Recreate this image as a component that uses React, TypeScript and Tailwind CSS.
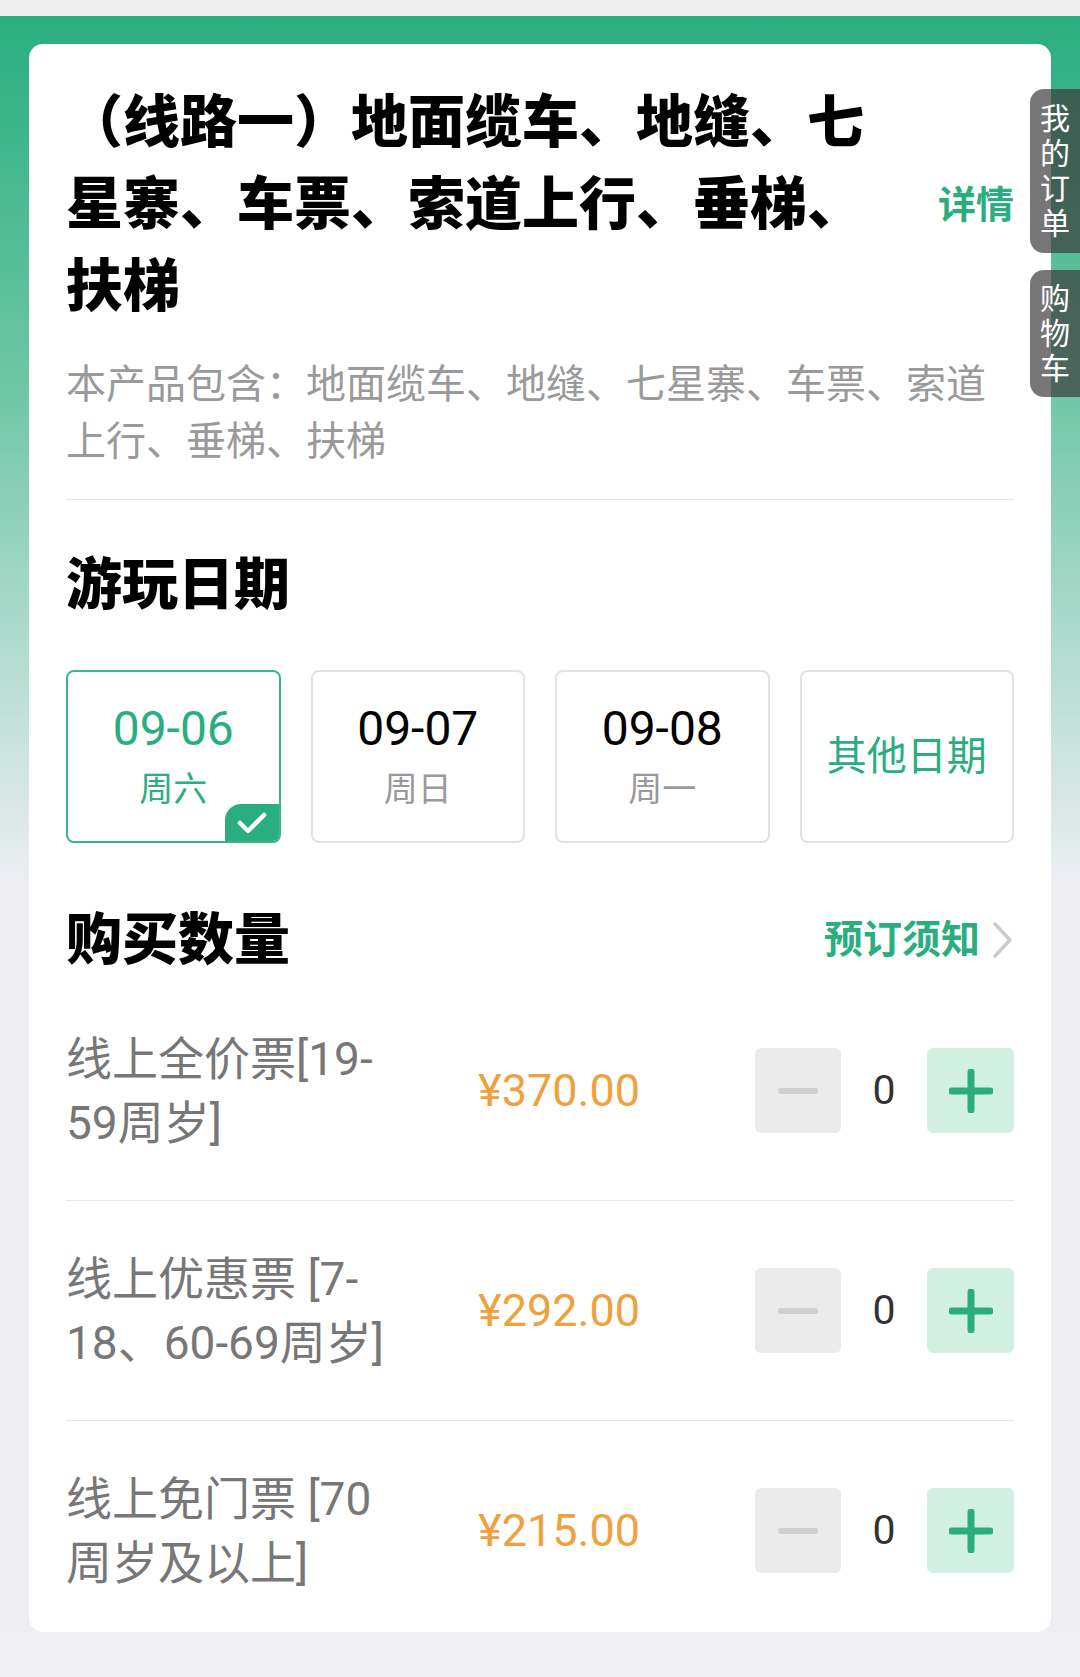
import React from 'react';

const dates = [
  { date: '09-06', day: '周六', active: true },
  { date: '09-07', day: '周日' },
  { date: '09-08', day: '周一' },
];

const tickets = [
  { lines: ['线上全价票[19-', '59周岁]'], price: '¥370.00' },
  { lines: ['线上优惠票 [7-', '18、60-69周岁]'], price: '¥292.00' },
  { lines: ['线上免门票 [70', '周岁及以上]'], price: '¥215.00' },
];

function Stepper() {
  return (
    <div className="flex items-center">
      <button className="flex h-[85px] w-[86px] items-center justify-center rounded-[6px] bg-[#ebebeb]">
        <span className="block h-[6px] w-[40px] rounded-full bg-[#cfcfcf]" />
      </button>
      <span className="w-[86px] text-center text-[41px] leading-none text-[#333]">0</span>
      <button className="flex h-[85px] w-[87px] items-center justify-center rounded-[6px] bg-[#d3f1e2]">
        <svg width="44" height="44" viewBox="0 0 44 44">
          <path d="M22 3v38M3 22h38" stroke="#2aae7f" strokeWidth="7" strokeLinecap="round" />
        </svg>
      </button>
    </div>
  );
}

export default function App() {
  return (
    <div className="relative h-[1677px] w-[1080px] overflow-hidden bg-[#efeff4] font-[Roboto,'Noto_Sans_CJK_SC',sans-serif]">
      <div className="h-[16px] bg-[#efefef]" />
      <div className="bg-[linear-gradient(180deg,#29ae80_0px,#6fc6a7_370px,#eeeef3_870px)] pt-[28px]">
        <div className="mx-[29px] rounded-[14px] bg-white px-[37px] pt-[38px]">
          {/* header */}
          <div className="flex items-center justify-between">
            <h1 className="w-[810px] text-[57px] font-black leading-[82px] text-black">
              （线路一）地面缆车、地缝、七星寨、车票、索道上行、垂梯、扶梯
            </h1>
            <span className="text-[38px] font-bold text-[#2aae7f]">详情</span>
          </div>
          <p className="mt-[28px] text-[40px] leading-[57px] text-[#9a9a9a]">
            本产品包含：地面缆车、地缝、七星寨、车票、索道上行、垂梯、扶梯
          </p>
          <div className="mt-[29px] h-px bg-[#e6e6e6]" />

          {/* dates */}
          <h2 className="mt-[50px] text-[56px] font-black leading-[70px] text-black">游玩日期</h2>
          <div className="mt-[50px] grid grid-cols-4 gap-[30px]">
            {dates.map((d) => (
              <div
                key={d.date}
                className={
                  d.active
                    ? 'relative flex h-[173px] flex-col items-center justify-center overflow-hidden rounded-[8px] border-2 border-[#3cb487]'
                    : 'relative flex h-[173px] flex-col items-center justify-center rounded-[8px] border-2 border-[#e2e2e2]'
                }
              >
                <span className={d.active ? 'text-[48px] leading-[56px] text-[#2aae7f]' : 'text-[48px] leading-[56px] text-black'}>
                  {d.date}
                </span>
                <span className={d.active ? 'mt-[8px] text-[34px] leading-[48px] text-[#2aae7f]' : 'mt-[8px] text-[34px] leading-[48px] text-[#999]'}>
                  {d.day}
                </span>
                {d.active && (
                  <div className="absolute bottom-0 right-0 flex h-[37px] w-[54px] items-center justify-center rounded-tl-[16px] bg-[#2aae7f]">
                    <svg width="30" height="24" viewBox="0 0 30 24">
                      <path d="M3 12l8 8L27 4" fill="none" stroke="white" strokeWidth="4.5" strokeLinecap="round" strokeLinejoin="round" />
                    </svg>
                  </div>
                )}
              </div>
            ))}
            <div className="flex h-[173px] items-center justify-center rounded-[8px] border-2 border-[#e2e2e2]">
              <span className="text-[40px] text-[#2aae7f]">其他日期</span>
            </div>
          </div>

          {/* quantity */}
          <div className="mt-[62px] flex items-center justify-between">
            <h2 className="text-[56px] font-black leading-[70px] text-black">购买数量</h2>
            <div className="flex items-center gap-[12px]">
              <span className="text-[39px] font-bold text-[#2aae7f]">预订须知</span>
              <svg width="22" height="38" viewBox="0 0 22 38">
                <path d="M3 3l15 16L3 35" fill="none" stroke="#cccccc" strokeWidth="3.5" strokeLinecap="round" strokeLinejoin="round" />
              </svg>
            </div>
          </div>

          <div className="mt-[6px]">
            {tickets.map((t, i) => (
              <div
                key={t.price}
                className={
                  i < tickets.length - 1
                    ? 'flex h-[220px] items-center border-b border-[#e6e6e6]'
                    : 'flex h-[211px] items-center pt-[8px]'
                }
              >
                <div className="w-[340px] text-[46px] leading-[64px] text-[#777]">
                  {t.lines[0]}
                  <br />
                  {t.lines[1]}
                </div>
                <div className="w-[234px] text-right text-[45px] text-[#eea13e]">{t.price}</div>
                <div className="ml-auto">
                  <Stepper />
                </div>
              </div>
            ))}
          </div>
        </div>
      </div>

      {/* floating side tabs */}
      <div className="absolute right-0 top-[89px] flex w-[50px] flex-col items-center rounded-l-[14px] bg-[rgba(60,60,60,0.7)] py-[12px] text-[30px] leading-[35px] text-white">
        <span>我</span>
        <span>的</span>
        <span>订</span>
        <span>单</span>
      </div>
      <div className="absolute right-0 top-[270px] flex w-[50px] flex-col items-center rounded-l-[14px] bg-[rgba(60,60,60,0.7)] py-[11px] text-[30px] leading-[35px] text-white">
        <span>购</span>
        <span>物</span>
        <span>车</span>
      </div>
    </div>
  );
}
